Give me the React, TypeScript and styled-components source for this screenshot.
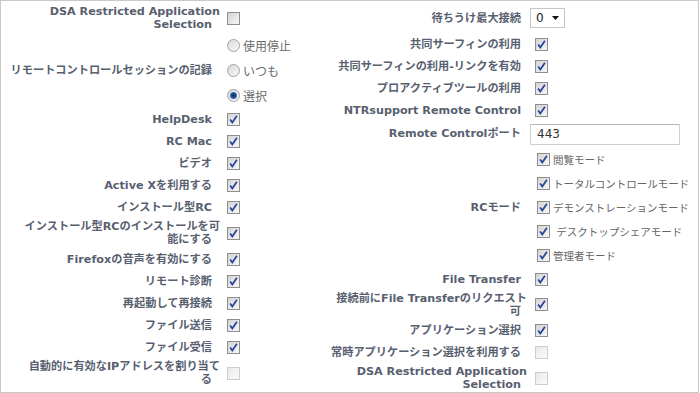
import React from "react";
import styled, { createGlobalStyle } from "styled-components";

const Global = createGlobalStyle`
  html, body { margin: 0; padding: 0; background: #fff; }
  body { font-family: "DejaVu Sans", "Noto Sans CJK JP", sans-serif; }
`;

const Panel = styled.div`
  box-sizing: border-box;
  width: 699px;
  height: 393px;
  border: 1px solid #c9c9c9;
  display: grid;
  grid-template-columns: 309px 1fr;
  overflow: hidden;
  background: #fff;
`;

const Column = styled.div<{ $label: number; $pad: number }>`
  display: flex;
  flex-direction: column;
  padding-top: 2px;
  --label-w: ${(p) => p.$label}px;
  --label-pad: ${(p) => p.$pad}px;
`;

const Row = styled.div<{ $h?: number }>`
  display: grid;
  grid-template-columns: var(--label-w) 1fr;
  align-items: center;
  min-height: ${(p) => p.$h ?? 22}px;
`;

const Label = styled.div`
  text-align: right;
  font-weight: bold;
  font-size: 11.2px;
  line-height: 13px;
  color: #585f70;
  white-space: nowrap;
`;

const LabelText = styled.span`
  padding-right: var(--label-pad);
`;

const Control = styled.div<{ $pad: number }>`
  padding-left: ${(p) => p.$pad}px;
  display: flex;
  align-items: center;
`;

const Box = styled.span<{ $disabled?: boolean }>`
  box-sizing: border-box;
  width: 13px;
  height: 13px;
  flex: none;
  border: 1px solid ${(p) => (p.$disabled ? "#cdcdcd" : "#8e8e8e")};
  background: ${(p) =>
    p.$disabled
      ? "linear-gradient(135deg, #e9e9e9, #fbfbfb)"
      : "linear-gradient(135deg, #d4d4d4, #f7f7f7)"};
  display: inline-flex;
  align-items: center;
  justify-content: center;
`;

const Check = ({ on = true, disabled = false }: { on?: boolean; disabled?: boolean }) => (
  <Box $disabled={disabled}>
    {on && (
      <svg width="11" height="11" viewBox="0 0 11 11">
        <path d="M2.2 5.6 L4.3 8.6 L8.9 1.8" fill="none" stroke="#23409a" strokeWidth="1.7" />
      </svg>
    )}
  </Box>
);

const RadioList = styled.div`
  display: flex;
  flex-direction: column;
`;

const RadioItem = styled.div`
  height: 25px;
  display: flex;
  align-items: center;
  gap: 3px;
  font-size: 12px;
  color: #6a6a6a;
`;

const RadioCircle = styled.span<{ $on?: boolean }>`
  box-sizing: border-box;
  width: 13px;
  height: 13px;
  border-radius: 50%;
  border: 1px solid #a3a3a3;
  background: linear-gradient(135deg, #d9d9d9, #f8f8f8);
  display: inline-flex;
  align-items: center;
  justify-content: center;
  &::after {
    content: "";
    display: ${(p) => (p.$on ? "block" : "none")};
    width: 7px;
    height: 7px;
    border-radius: 50%;
    background: radial-gradient(circle at 50% 50%, #0c2350 0, #1d4c8f 40%, #56a0e6 100%);
  }
`;

const ModeList = styled.div`
  display: flex;
  flex-direction: column;
  padding: 1px 0;
`;

const ModeItem = styled.div`
  height: 24px;
  display: flex;
  align-items: center;
  gap: 3px;
  font-size: 10.5px;
  color: #666;
  white-space: pre;
`;

const Select = styled.div`
  box-sizing: border-box;
  width: 35px;
  height: 20px;
  border: 1px solid #c6c6c6;
  background: #fff;
  display: flex;
  align-items: center;
  justify-content: space-between;
  padding: 0 5px 0 5px;
  font-size: 12px;
  color: #222;
`;

const TextInput = styled.input`
  box-sizing: border-box;
  width: 150px;
  height: 21px;
  border: 1px solid #d0d0d0;
  border-top-color: #b8b8b8;
  padding: 0 6px;
  margin: 1px 0 0;
  font-family: "DejaVu Sans", sans-serif;
  font-size: 12px;
  color: #333;
  outline: none;
`;

type Item = { label: React.ReactNode; on?: boolean; disabled?: boolean; h?: number };

const CheckRow = ({ label, on = true, disabled = false, h, pad }: Item & { pad: number }) => (
  <Row $h={h}>
    <Label>
      <LabelText>{label}</LabelText>
    </Label>
    <Control $pad={pad}>
      <Check on={on} disabled={disabled} />
    </Control>
  </Row>
);

const leftTop: Item[] = [
  { label: "HelpDesk" },
  { label: "RC Mac" },
  { label: "ビデオ" },
  { label: "Active Xを利用する" },
  { label: "インストール型RC" },
  {
    label: (
      <>
        インストール型RCのインストールを可
        <br />
        能にする
      </>
    ),
    h: 30,
  },
  { label: "Firefoxの音声を有効にする" },
  { label: "リモート診断" },
  { label: "再起動して再接続" },
  { label: "ファイル送信" },
  { label: "ファイル受信" },
  {
    label: (
      <>
        自動的に有効なIPアドレスを割り当て
        <br />る
      </>
    ),
    h: 30,
    on: false,
    disabled: true,
  },
];

const rightTop: Item[] = [
  { label: "共同サーフィンの利用" },
  { label: "共同サーフィンの利用-リンクを有効" },
  { label: "プロアクティブツールの利用" },
  { label: "NTRsupport Remote Control" },
];

const rightBottom: Item[] = [
  { label: "File Transfer" },
  {
    label: (
      <>
        接続前にFile Transferのリクエスト
        <br />
        可
      </>
    ),
    h: 29,
  },
  { label: "アプリケーション選択" },
  { label: "常時アプリケーション選択を利用する", on: false, disabled: true },
  {
    label: (
      <>
        DSA Restricted Application
        <br />
        Selection
      </>
    ),
    h: 30,
    on: false,
    disabled: true,
  },
];

const modes = ["閲覧モード", "トータルコントロールモード", "デモンストレーションモード", " デスクトップシェアモード", "管理者モード"];

export default function App() {
  return (
    <>
      <Global />
      <Panel>
        <Column $label={219} $pad={8}>
          <CheckRow
            pad={7}
            h={30}
            on={false}
            label={
              <>
                DSA Restricted Application
                <br />
                Selection
              </>
            }
          />
          <Row>
            <Label>
              <LabelText>リモートコントロールセッションの記録</LabelText>
            </Label>
            <Control $pad={7}>
              <RadioList>
                <RadioItem>
                  <RadioCircle />
                  使用停止
                </RadioItem>
                <RadioItem>
                  <RadioCircle />
                  いつも
                </RadioItem>
                <RadioItem>
                  <RadioCircle $on />
                  選択
                </RadioItem>
              </RadioList>
            </Control>
          </Row>
          {leftTop.map((it, i) => (
            <CheckRow key={i} pad={7} {...it} />
          ))}
        </Column>
        <Column $label={217} $pad={6}>
          <Row $h={30}>
            <Label>
              <LabelText>待ちうけ最大接続</LabelText>
            </Label>
            <Control $pad={3}>
              <Select>
                <span>0</span>
                <svg width="7" height="4" viewBox="0 0 7 4">
                  <path d="M0 0 H7 L3.5 4 Z" fill="#111" />
                </svg>
              </Select>
            </Control>
          </Row>
          {rightTop.map((it, i) => (
            <CheckRow key={i} pad={8} {...it} />
          ))}
          <Row $h={25}>
            <Label>
              <LabelText>Remote Controlポート</LabelText>
            </Label>
            <Control $pad={3}>
              <TextInput defaultValue="443" />
            </Control>
          </Row>
          <Row>
            <Label>
              <LabelText>RCモード</LabelText>
            </Label>
            <Control $pad={10}>
              <ModeList>
                {modes.map((m) => (
                  <ModeItem key={m}>
                    <Check />
                    {m}
                  </ModeItem>
                ))}
              </ModeList>
            </Control>
          </Row>
          {rightBottom.map((it, i) => (
            <CheckRow key={i} pad={8} {...it} />
          ))}
        </Column>
      </Panel>
    </>
  );
}
